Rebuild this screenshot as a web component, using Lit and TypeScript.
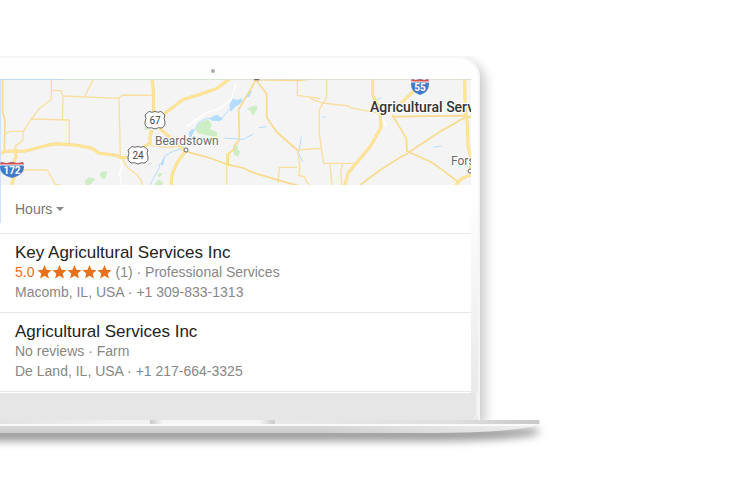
import { LitElement, html, svg, css, nothing } from "lit";
import { customElement, property } from "lit/decorators.js";

interface Place {
  name: string;
  rating?: string;
  reviews: string;
  kind: string;
  town: string;
  phone: string;
}

const places: Place[] = [
  { name: "Key Agricultural Services Inc", rating: "5.0", reviews: "(1)", kind: "Professional Services", town: "Macomb, IL, USA", phone: "+1 309-833-1313" },
  { name: "Agricultural Services Inc", reviews: "No reviews", kind: "Farm", town: "De Land, IL, USA", phone: "+1 217-664-3325" },
];

/* Roads are drawn at three units to the pixel. */
const minorRoads = [
  "M154 27V88L118 116L94 147L70 184L68 212L48 226L44 245",
  "M154 62H182L189 78L187 149",
  "M94 147L208 150V222",
  "M15 193L30 184H70",
  "M189 78L355 85L368 75L462 76",
  "M284 27L276 34L270 48L262 62L254 80",
  "M357 85L361 262",
  "M70 300H142L166 344H182",
  "M366 262L380 290L412 316L425 335V347",
  "M450 226L500 232L540 228",
  "M450 180L452 226",
  "M892 27V76L960 85",
  "M680 250V347",
  "M892 240L900 290L896 316L912 320L922 338L932 347",
  "M892 292H838L834 338",
  "M892 240L934 237",
  "M980 27V82L966 104L958 120V190L964 236L971 280H1062",
  "M930 85L966 99L1048 108L1050 113L1140 130",
  "M930 236H964",
  "M990 280L996 347M1029 280L1022 305L1026 347",
];
const midRoads = [
  "M8 27V130L15 150L13 245",
  "M766 32L746 68L716 118L718 210L704 226L700 240L686 250L684 284",
  "M770 32L800 72V142L830 186L892 240",
  "M770 29L900 31L930 27",
  "M556 244L630 264L684 284L730 294L760 308L860 338L896 347",
  "M1176 134L1219 205L1221 244L1293 276L1325 298L1375 336",
  "M1178 140L1398 137L1413 143",
  "M1225 248L1282 210L1325 182L1398 140",
  "M1225 250L1204 260L1141 300L1080 345",
];
const majorRoads = [
  "M4 251L12 244H72L140 226L170 221L230 226L276 235L297 250L350 256L362 263L395 262",
  "M45 235L48 260L38 285M45 315L34 347",
  "M456 27L460 60L461 130",
  "M456 180L450 200V220L430 232",
  "M688 27L650 56L594 75L550 88L508 120L470 147",
  "M480 176L540 230L556 244L530 280L516 315L514 347",
  "M1118 27V75L1140 118L1143 172L1112 228L1045 308L1034 347",
  "M1254 50L1198 105",
  "M1394 27L1396 125L1402 160L1404 230L1412 260V320",
  "M1366 347L1384 326L1413 315",
];
const waters = [
  "M450 345L468 310L480 290L476 284L486 278L496 256L520 244L548 235",
  "M548 235L560 210L584 180L596 158L620 145L660 150L690 116L730 92L760 45",
  "M574 200L564 218M670 204L730 208L760 192M778 173L800 170M904 200L896 250L908 276",
  "M1270 128L1320 125M1300 232L1324 228M1130 90L1145 82M966 143L976 140",
];

const star = svg`<path d="M12 0l3.400 8.200 8.600.7-6.500 5.700 2 8.400L12 18.500l-7.500 4.500 2-8.400L0 8.900l8.600-.7z"/>`;

const usRoute = (x: number, y: number, n: string) => svg`
  <g transform="translate(${x} ${y})">
    <path d="M-6-8.500Q-3-7 0-8.500Q3-7 6-8.500L10-5Q8-2 10 2Q11 6 7 8Q3 7 0 9Q-3 7-7 8Q-11 6-10 2Q-8-2-10-5Z" fill="#fff" stroke="#666"/>
    <text class="route" y="4">${n}</text>
  </g>`;

const interstate = (x: number, y: number, w: number, n: string) => svg`
  <g transform="translate(${x} ${y})">
    <path d="M${-w + 1}-8Q${-w / 2}-6 0-8Q${w / 2}-6 ${w - 1}-8L${w}-3Q${w} 5 0 8Q${-w} 5 ${-w}-3Z" fill="#3f7acb"/>
    <path d="M${-w + 1}-8Q${-w / 2}-6 0-8Q${w / 2}-6 ${w - 1}-8L${w}-5H${-w}Z" fill="#d84f50"/>
    <path d="M${-w}-5H${w}" stroke="#fff"/>
    <text class="route shield" y="4">${n}</text>
  </g>`;

@customElement("area-map")
class AreaMap extends LitElement {
  static styles = css`
    :host { display: block; }
    svg { display: block; width: 100%; height: auto; background: #f4f4f4; }
    text { font-family: Roboto, sans-serif; }
    .halo { paint-order: stroke; stroke: #fff; stroke-width: 2px; stroke-linejoin: round; }
    .town { font-size: 12px; fill: #6a6a6a; }
    .pin { font-size: 14px; font-weight: 500; fill: #333; }
    .route { font-size: 10px; text-anchor: middle; fill: #444; }
    .shield { font-weight: 700; fill: #fff; }
  `;
  render() {
    return html`
      <svg viewBox="0 0 471 106" role="img" aria-label="Map of central Illinois">
        <g transform="scale(.33333) translate(0 -27)" fill="none" stroke-linejoin="round">
          <g fill="#cdeec5">
            <path d="M254 332L266 322L286 326L278 336L268 347H258ZM298 314L304 306L321 303L318 324L308 328ZM432 172L444 168V180H434ZM466 340L480 328L484 347H466Z"/>
            <path d="M588 178L598 158L624 148L636 164L630 178L652 186L650 200L620 196L594 190ZM740 116L752 110L770 106L772 118L758 138L752 124ZM700 230L716 226L712 238L720 244L716 260L702 254ZM474 310H488L480 320H472ZM464 344L474 330L490 336L486 347Z"/>
          </g>
          <g fill="#b4dcff">
            <path d="M688 104L698 86L712 90L728 84L720 102L704 112L692 126ZM628 144L650 134L670 146L658 154L636 152ZM735 84L745 64L756 62L748 80ZM565 190L576 176L584 180L572 204ZM482 284L488 268L494 260L490 286Z"/>
          </g>
          <g stroke="#b4dcff" stroke-width="3">${waters.map((d) => svg`<path d=${d} />`)}</g>
          <path d="M560 170L620 128L660 116L694 88L708 40M360 270L366 290L358 310L366 347M1125 105L1160 170" stroke="#fff" stroke-width="4"/>
          <g stroke="#f8dfa0" stroke-width="4">${minorRoads.map((d) => svg`<path d=${d} />`)}</g>
          <g stroke="#f8da8d" stroke-width="5">${midRoads.map((d) => svg`<path d=${d} />`)}</g>
          <g stroke="#f6d98c" stroke-width="9">${majorRoads.map((d) => svg`<path d=${d} />`)}</g>
          <g stroke="#ffe695" stroke-width="6">${majorRoads.map((d) => svg`<path d=${d} />`)}</g>
          <path d="M0 28H190" stroke="#b5d4fb" stroke-width="3"/>
          <path d="M190 28H690" stroke="#cfe3c4" stroke-width="3"/>
          <path d="M690 28H1413" stroke="#dddcd2" stroke-width="3"/>
          <path d="M1 27V347" stroke="#cfe2fb" stroke-width="4"/>
          <path d="M762 28H778" stroke="#776a66" stroke-width="6"/>
        </g>
        ${usRoute(155, 41, "67")} ${usRoute(138, 76, "24")}
        ${interstate(12, 91, 12, "172")} ${interstate(420, 8, 9, "55")}
        <circle cx="186" cy="71" r="2" fill="#fff" stroke="#666"/>
        <circle cx="470" cy="92" r="2" fill="#fff" stroke="#666"/>
        <text class="town halo" x="155" y="66">Beardstown</text>
        <text class="town halo" x="451" y="86">Fors</text>
        <text class="pin halo" x="370" y="33">Agricultural Serv</text>
      </svg>`;
  }
}

@customElement("place-row")
class PlaceRow extends LitElement {
  @property({ attribute: false }) place!: Place;
  static styles = css`
    :host { display: block; border-bottom: 1px solid #e8e8e8; padding: 9px 15px; color: #878787; font-size: 14px; white-space: nowrap; }
    h2 { margin: 0; font-size: 17px; line-height: 20px; font-weight: 400; color: #222; }
    p { margin: 0; }
    .meta { display: flex; gap: 3px; line-height: 18px; }
    .contact { line-height: 22px; }
    .rating { color: #e7711b; }
    .stars { display: flex; align-items: center; fill: #e7711b; }
    .stars svg { width: 15px; height: 14px; }
  `;
  render() {
    const p = this.place;
    return html`
      <h2>${p.name}</h2>
      <p class="meta">
        ${p.rating
          ? html`<span class="rating">${p.rating}</span>
              <span class="stars" role="img" aria-label="5 stars">${[0, 1, 2, 3, 4].map(() => html`<svg viewBox="0 0 24 24">${star}</svg>`)}</span>`
          : nothing}
        <span>${p.reviews} · ${p.kind}</span>
      </p>
      <p class="contact">${p.town} · ${p.phone}</p>`;
  }
}

@customElement("app-root")
class AppRoot extends LitElement {
  static styles = css`
    :host { display: block; box-sizing: border-box; min-height: 100vh; padding-top: 56px; background: #fff; font-family: "Liberation Sans", Arial, sans-serif; overflow: hidden; }
    .lid { box-sizing: border-box; width: 64%; padding-right: 7px; border: solid #f5f5f5; border-width: 2px 2px 0 0; border-radius: 0 22px 0 0; background: linear-gradient(#fefefe 40%, #e6e6e6); box-shadow: 5px 5px 12px #00000038; clip-path: inset(0 -30px 0 0); }
    .bezel { display: flex; height: 21px; align-items: center; justify-content: center; padding-top: 4px; box-sizing: border-box; }
    .camera { width: 4px; height: 4px; border-radius: 50%; background: #aaa; margin-right: 46px; }
    .screen { overflow: hidden; background: #fff; padding-bottom: 1px; }
    .filters { display: flex; align-items: center; height: 48px; padding-left: 15px; border-bottom: 1px solid #e8e8e8; background: linear-gradient(#cfe2fb, #cfe2fb) 0 0 / 1px 38px no-repeat; }
    button { display: flex; align-items: center; gap: 4px; padding: 0; border: 0; background: none; color: #777; font: 14px/16px "Liberation Sans", Arial, sans-serif; }
    .caret { border: solid transparent; border-width: 4px 4px 0; border-top-color: #888; }
    .chin { height: 27px; margin-right: -7px; box-sizing: border-box; background: #e6e6e6; border-right: 2px solid #f2f2f2; border-radius: 0 0 6px 0; }
    .base { display: block; width: 73%; height: auto; overflow: visible; }
  `;
  render() {
    return html`
      <main>
        <div class="lid">
          <div class="bezel"><span class="camera"></span></div>
          <div class="screen">
            <area-map></area-map>
            <div class="filters"><button type="button">Hours <span class="caret"></span></button></div>
            ${places.map((p) => html`<place-row .place=${p}></place-row>`)}
          </div>
          <div class="chin"></div>
        </div>
        <svg class="base" viewBox="0 0 548 40" aria-hidden="true">
          <defs>
            <linearGradient id="under" x2="0" y2="1"><stop stop-color="#dadada"/><stop offset="1" stop-color="#cccccc"/></linearGradient>
            <linearGradient id="tip"><stop offset=".6" stop-color="#fff" stop-opacity="0"/><stop offset="1" stop-color="#fff" stop-opacity=".6"/></linearGradient>
            <linearGradient id="deck"><stop stop-color="#e2e2e2"/><stop offset=".25" stop-color="#f2f2f2"/><stop offset=".85" stop-color="#dedede"/><stop offset="1" stop-color="#c8c8c8"/></linearGradient>
            <linearGradient id="notch"><stop stop-color="#c8c8c8"/><stop offset=".1" stop-color="#f5f5f5"/><stop offset=".88" stop-color="#f5f5f5"/><stop offset="1" stop-color="#c8c8c8"/></linearGradient>
            <filter id="soft" x="-10%" y="-100%" width="120%" height="300%"><feGaussianBlur stdDeviation="4"/></filter>
          </defs>
          <path d="M-20 8H534Q546 12 534 15Q500 21 420 21H-20Z" fill="#000" opacity=".4" filter="url(#soft)"/>
          <path d="M0 5H540Q510 13 420 13H0Z" fill="url(#under)"/>
          <path d="M0 5H540Q510 13 420 13H0Z" fill="url(#tip)"/>
          <path d="M0 0H540V4H0Z" fill="url(#deck)"/>
          <path d="M0 4H540L532 6H0Z" fill="#fafafa"/>
          <path d="M150 0H275V4H150Z" fill="url(#notch)"/>
        </svg>
      </main>`;
  }
}
